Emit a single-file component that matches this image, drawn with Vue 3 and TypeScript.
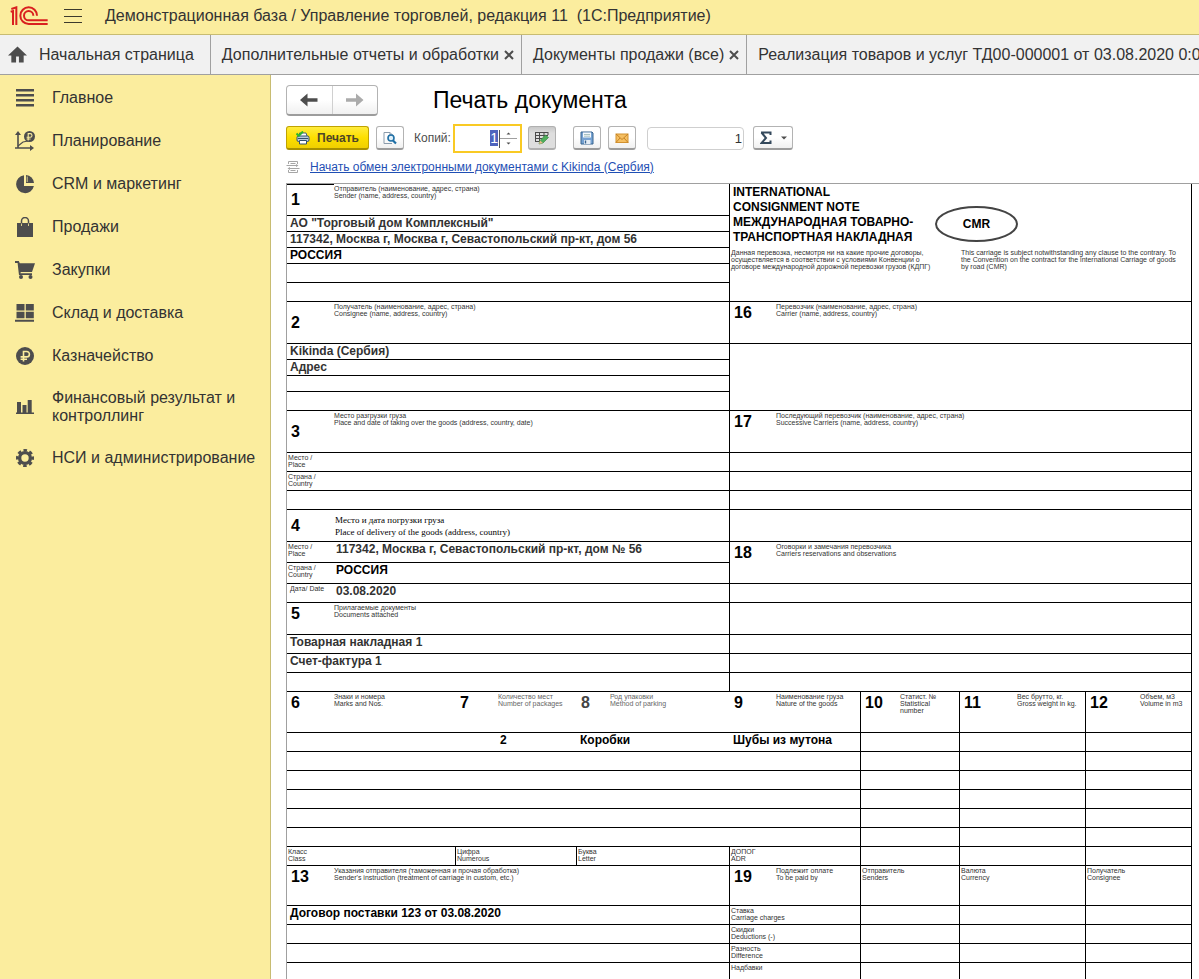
<script setup lang="ts">
import { onMounted, ref } from 'vue'

type Kind = 'blank' | 'field' | 'value' | 'tiny' | 'title'

interface Cell {
  kind: Kind
  span?: number
  rows?: number
  num?: string
  offset?: number
  lines?: string[]
  text?: string
  mods?: string
}

interface Row {
  height: number
  cells: Cell[]
}

const columns = [47, 122, 121, 153, 131, 99, 126, 106]

const blank = (span: number, mods = '', rows = 1): Cell => ({ kind: 'blank', span, mods, rows })
const field = (num: string, span: number, offset: number, lines: string[], mods = ''): Cell => ({
  kind: 'field', num, span, offset, lines, mods,
})
const value = (text: string, span: number, mods = ''): Cell => ({ kind: 'value', text, span, mods })
const tiny = (lines: string[], span: number, mods = ''): Cell => ({ kind: 'tiny', lines, span, mods })

const emptyGoods = (): Row => ({ height: 19, cells: [blank(5), blank(1), blank(1), blank(1)] })
const charge = (lines: string[], text = ''): Row => ({
  height: 19,
  cells: [text ? value(text, 4) : blank(4), tiny(lines, 1), blank(1), blank(1), blank(1)],
})

const rows: Row[] = [
  {
    height: 32,
    cells: [
      field('1', 4, 47, ['Отправитель (наименование, адрес, страна)', 'Sender (name, address, country)'], 'mid current'),
      { kind: 'title', span: 4, rows: 6 },
    ],
  },
  { height: 16, cells: [value('АО "Торговый дом Комплексный"', 4, 'soft')] },
  { height: 16, cells: [value('117342, Москва г, Москва г, Севастопольский пр-кт, дом 56', 4, 'soft')] },
  { height: 16, cells: [value('РОССИЯ', 4)] },
  { height: 19, cells: [blank(4)] },
  { height: 19, cells: [blank(4)] },
  {
    height: 42,
    cells: [
      field('2', 4, 47, ['Получатель (наименование, адрес, страна)', 'Consignee (name, address, country)'], 'mid'),
      field('16', 4, 46, ['Перевозчик (наименование, адрес, страна)', 'Carrier (name, address, country)']),
    ],
  },
  { height: 16, cells: [value('Kikinda (Сербия)', 4, 'soft'), blank(4, '', 4)] },
  { height: 16, cells: [value('Адрес', 4, 'soft')] },
  { height: 16, cells: [blank(4)] },
  { height: 19, cells: [blank(4)] },
  {
    height: 42,
    cells: [
      field('3', 4, 47, ['Место разгрузки груза', 'Place and date of taking over the goods (address, country, date)'], 'mid'),
      field('17', 4, 46, ['Последующий перевозчик (наименование, адрес, страна)', 'Successive Carriers (name, address, country)']),
    ],
  },
  { height: 19, cells: [tiny(['Место /', 'Place'], 4), blank(4)] },
  { height: 19, cells: [tiny(['Страна /', 'Country'], 4), blank(4)] },
  { height: 19, cells: [blank(4), blank(4)] },
  {
    height: 32,
    cells: [
      field('4', 4, 48, ['Место и дата погрузки груза', 'Place of delivery of the goods (address, country)'], 'mid serif'),
      blank(4),
    ],
  },
  {
    height: 21,
    cells: [
      tiny(['Место /', 'Place'], 1, 'open'),
      value('117342, Москва г, Севастопольский пр-кт, дом № 56', 3, 'soft near'),
      { ...field('18', 4, 46, ['Оговорки и замечания перевозчика', 'Carriers reservations and observations']), rows: 2 },
    ],
  },
  { height: 21, cells: [tiny(['Страна /', 'Country'], 1, 'open'), value('РОССИЯ', 3, 'near')] },
  { height: 19, cells: [tiny(['Дата/ Date'], 1, 'open inset'), value('03.08.2020', 3, 'soft near'), blank(4)] },
  { height: 32, cells: [field('5', 4, 47, ['Прилагаемые документы', 'Documents attached']), blank(4)] },
  { height: 19, cells: [value('Товарная накладная 1', 4, 'soft'), blank(4)] },
  { height: 19, cells: [value('Счет-фактура 1', 4, 'soft'), blank(4)] },
  { height: 19, cells: [blank(4), blank(4)] },
  {
    height: 41,
    cells: [
      field('6', 2, 47, ['Знаки и номера', 'Marks and Nos.'], 'open'),
      field('7', 1, 42, ['Количество мест', 'Number of packages'], 'open pale'),
      field('8', 1, 33, ['Род упаковки', 'Method of parking'], 'open pale dim'),
      field('9', 1, 46, ['Наименование груза', 'Nature of the goods']),
      field('10', 1, 39, ['Статист. №', 'Statistical', 'number']),
      field('11', 1, 57, ['Вес брутто, кг.', 'Gross weight in kg.']),
      field('12', 1, 54, ['Объем, м3', 'Volume in m3']),
    ],
  },
  {
    height: 19,
    cells: [
      blank(2, 'open'), value('2', 1, 'open count'), value('Коробки', 1, 'open'), value('Шубы из мутона', 1),
      blank(1), blank(1), blank(1),
    ],
  },
  emptyGoods(), emptyGoods(), emptyGoods(), emptyGoods(), emptyGoods(),
  {
    height: 19,
    cells: [
      tiny(['Класс', 'Class'], 2), tiny(['Цифра', 'Numerous'], 1), tiny(['Буква', 'Letter'], 1),
      tiny(['ДОПОГ', 'ADR'], 1), blank(1), blank(1), blank(1),
    ],
  },
  {
    height: 40,
    cells: [
      field('13', 4, 47, ['Указания отправителя (таможенная и прочая обработка)', "Sender's instruction (treatment of carriage in custom, etc.)"]),
      field('19', 1, 46, ['Подлежит оплате', 'To be paid by']),
      tiny(['Отправитель', 'Senders'], 1),
      tiny(['Валюта', 'Currency'], 1),
      tiny(['Получатель', 'Consignee'], 1),
    ],
  },
  charge(['Ставка', 'Carriage charges'], 'Договор поставки 123 от 03.08.2020'),
  charge(['Скидки', 'Deductions (-)']),
  charge(['Разность', 'Difference']),
  charge(['Надбавки']),
]

const sections = [
  { icon: 'menu', label: 'Главное' },
  { icon: 'plan', label: 'Планирование' },
  { icon: 'pie', label: 'CRM и маркетинг' },
  { icon: 'bag', label: 'Продажи' },
  { icon: 'cart', label: 'Закупки' },
  { icon: 'store', label: 'Склад и доставка' },
  { icon: 'coin', label: 'Казначейство' },
  { icon: 'bars', label: 'Финансовый результат и контроллинг' },
  { icon: 'gear', label: 'НСИ и администрирование' },
]

const copies = ref('1')
const total = ref('1')
const copiesInput = ref<HTMLInputElement | null>(null)

const step = (delta: number) => {
  copies.value = String(Math.max(1, (parseInt(copies.value, 10) || 1) + delta))
}

onMounted(() => {
  copiesInput.value?.focus()
  copiesInput.value?.select()
})
</script>

<template>
  <div class="app">
    <header class="titlebar">
      <svg class="logo" viewBox="0 0 114 60" fill="none" stroke="#d9201f">
        <path d="M2 17 L9 15 V57 M4 9 L19 4 V57" stroke-width="6" />
        <path d="M81 29 A25 25 0 1 0 56 54 H113" stroke-width="6" />
        <path d="M70 29 A14 14 0 1 0 56 43 H113" stroke-width="6" />
      </svg>
      <button class="burger" aria-label="Меню">
        <svg viewBox="0 0 18 16" stroke="#3c3a2c" stroke-width="1"><path d="M0 1.500H18M0 8.500H18M0 14.500H18" /></svg>
      </button>
      <span class="app-name">Демонстрационная база / Управление торговлей, редакция 11 &nbsp;(1С:Предприятие)</span>
    </header>

    <nav class="tabs">
      <button class="tab home">
        <svg viewBox="0 0 20 17" fill="#4d4d4d"><path d="M10 0 L20 9.500 H16.500 V17 H11.500 V10.500 H8.500 V17 H3.500 V9.500 H0 Z" /></svg>
        <span>Начальная страница</span>
      </button>
      <div class="tab">
        <span>Дополнительные отчеты и обработки</span>
        <button class="close" aria-label="Закрыть"><svg viewBox="0 0 10 10"><path d="M1 1 L9 9 M9 1 L1 9" /></svg></button>
      </div>
      <div class="tab">
        <span>Документы продажи (все)</span>
        <button class="close" aria-label="Закрыть"><svg viewBox="0 0 10 10"><path d="M1 1 L9 9 M9 1 L1 9" /></svg></button>
      </div>
      <div class="tab last"><span>Реализация товаров и услуг ТД00-000001 от 03.08.2020 0:00</span></div>
    </nav>

    <div class="body">
      <aside class="sidebar">
        <a v-for="s in sections" :key="s.label" class="section" href="#">
          <svg class="section-icon" viewBox="0 0 20 20" fill="#4d4d4d">
            <path v-if="s.icon === 'menu'" d="M1 1h18v2.400H1zM1 6h18v2.400H1zM1 11h18v2.400H1zM1 16h18v2.400H1z" />
            <g v-else-if="s.icon === 'plan'">
              <path d="M3 0 L6 4 H3.800 V16.200 H15 V14 L19 17 L15 20 V17.800 H0 V16.200 H2.200 V4 H0 Z" />
              <path d="M3 15 L8 11 L13 10" fill="none" stroke="#4d4d4d" stroke-width="1.200" />
              <circle cx="14.500" cy="5.500" r="5.500" />
              <path d="M13.200 9.500V2.600h2a1.800 1.800 0 0 1 0 3.600h-3.600M11.600 8h4" fill="none" stroke="#fbed9e" stroke-width="1.100" />
            </g>
            <g v-else-if="s.icon === 'pie'">
              <path d="M9 1.200 A9 9 0 1 0 18.900 12 H9 Z" />
              <path d="M11 1 A8.500 8.500 0 0 1 19 9 H11 Z" />
              <path d="M12.200 2.500V8" stroke="#fbed9e" stroke-width="0.800" />
            </g>
            <g v-else-if="s.icon === 'bag'">
              <path d="M2 6 H18 V20 H2 Z" />
              <path d="M6.500 9 V4 A3.500 3.500 0 0 1 13.500 4 V9" fill="none" stroke="#4d4d4d" stroke-width="1.500" />
              <path d="M6.500 6.500V9M13.500 6.500V9" stroke="#fbed9e" stroke-width="0.800" />
            </g>
            <g v-else-if="s.icon === 'cart'">
              <path d="M0 1 H3.800 L4.800 3.200 H20 L17 12 H5.800 L5.400 13.200 H17 V15 H4 L3.600 12 L2.600 3 H0 Z" />
              <circle cx="6" cy="17" r="2" /><circle cx="15.500" cy="17" r="2" />
            </g>
            <path v-else-if="s.icon === 'store'" d="M1.500 1h8v6.500h-8zM10.800 1h8v6.500h-8zM1.500 8.800h8v6.500h-8zM10.800 8.800h8v6.500h-8zM0 16.800h19v2H0z" />
            <g v-else-if="s.icon === 'coin'">
              <circle cx="10" cy="10" r="9" />
              <path d="M8.500 15.500V5.500h3.200a2.700 2.700 0 0 1 0 5.400H5.600M5.600 13.300h6.400" fill="none" stroke="#fbed9e" stroke-width="1.600" />
            </g>
            <path v-else-if="s.icon === 'bars'" d="M2 5h4v10.500h1.500V8h4v7.500h1.200V3h4v12.500H19V17H1v-1.500h1z" />
            <g v-else>
              <circle cx="10" cy="10" r="5.400" fill="none" stroke="#4d4d4d" stroke-width="3.400" />
              <circle cx="10" cy="10" r="7.800" fill="none" stroke="#4d4d4d" stroke-width="2.400" stroke-dasharray="3.600 2.526" stroke-dashoffset="1.800" />
            </g>
          </svg>
          <span>{{ s.label }}</span>
        </a>
      </aside>

      <main class="content">
        <div class="heading">
          <div class="history">
            <button aria-label="Назад"><svg viewBox="0 0 18 14" fill="#4d4d4d"><path d="M0 7 L7.500 0.500 V5.300 H17.500 V8.700 H7.500 V13.500 Z" /></svg></button>
            <button aria-label="Вперед"><svg viewBox="0 0 18 14" fill="#ababab"><path d="M17.500 7 L10 0.500 V5.300 H0 V8.700 H10 V13.500 Z" /></svg></button>
          </div>
          <h1>Печать документа</h1>
        </div>

        <div class="toolbar">
          <button class="btn print">
            <svg viewBox="0 0 14 14">
              <path d="M3.500 5 V2 H10 L11 5" fill="#fff" stroke="#4a6078" />
              <rect x="1" y="5" width="12" height="5.500" rx="1.500" fill="#b9cbdc" stroke="#34506c" />
              <path d="M2 7.500H12" stroke="#34506c" />
              <path d="M3.500 9.500H10.500V13H3.500Z" fill="#fff" stroke="#34506c" />
              <path d="M0.500 2.500 L2.800 4.800 L7 0.500" fill="none" stroke="#2db52d" stroke-width="2" />
            </svg>
            <span>Печать</span>
          </button>
          <button class="btn icon" aria-label="Предварительный просмотр">
            <svg viewBox="0 0 14 14" fill="none">
              <path d="M9 12.500H1V1.500H7L9.500 4" stroke="#8b9bab" /><path d="M7 1.500V4H9.500" stroke="#8b9bab" />
              <circle cx="8" cy="7" r="3" fill="#dff0fa" stroke="#1f6fa5" stroke-width="1.600" />
              <path d="M10 9.500 L13 12.500" stroke="#1f6fa5" stroke-width="2.200" />
            </svg>
          </button>
          <label class="copies-label" for="copies">Копий:</label>
          <div class="copies">
            <input id="copies" ref="copiesInput" v-model="copies" type="text" inputmode="numeric" />
            <div class="spin">
              <button aria-label="Больше" @click="step(1)"><svg viewBox="0 0 5 3"><path d="M0.500 2.500 L2.500 0.500 L4.500 2.500Z" /></svg></button>
              <button aria-label="Меньше" @click="step(-1)"><svg viewBox="0 0 5 3"><path d="M0.500 0.500 L2.500 2.500 L4.500 0.500Z" /></svg></button>
            </div>
          </div>
          <button class="btn icon pressed" aria-label="Редактирование">
            <svg viewBox="0 0 14 14" fill="none">
              <path d="M0.500 1.500H13M0.500 4.500H13M0.500 7.500H9M0.500 10.500H7M0.500 1V11M4.500 1V11M9 1V6M13 1V4" stroke="#4a4a4a" />
              <path d="M4 13 L5 9.500 L10.500 4 L13.500 6.500 L8 12 Z" fill="#4fae5c" stroke="#2f7d3b" stroke-width="0.600" />
              <path d="M4 13 L5 9.500 L8 12 Z" fill="#e9b98a" />
            </svg>
          </button>
          <button class="btn icon save" aria-label="Сохранить">
            <svg viewBox="0 0 14 14">
              <path d="M1 1H12L13 2V13H1Z" fill="#77a3d3" stroke="#39648f" />
              <rect x="3" y="1.500" width="8" height="5" fill="#f5f9fc" /><path d="M4 3.500H10M4 5.200H10" stroke="#8aa" stroke-width="0.700" />
              <rect x="4" y="9" width="6.500" height="4" fill="#e6eef6" /><path d="M5.500 9.500V12.500" stroke="#39648f" stroke-width="1.400" />
            </svg>
          </button>
          <button class="btn icon" aria-label="Отправить по почте">
            <svg viewBox="0 0 14 14">
              <rect x="1" y="3" width="12" height="8.500" fill="#f5bf62" stroke="#d2912f" />
              <path d="M1 3 L7 8.500 L13 3 M1 11.500 L5 7 M13 11.500 L9 7" fill="none" stroke="#c27d1f" stroke-width="0.900" />
            </svg>
          </button>
          <input v-model="total" class="total" type="text" aria-label="Сумма выделенных ячеек" readonly />
          <button class="btn sigma" aria-label="Сумма">
            <svg class="sum" viewBox="0 0 12 14"><path d="M1 1.500H10.500V4M1.500 1.500L6 7L1.500 12H10.500V9.500" fill="none" stroke="#34495c" stroke-width="2" /></svg>
            <svg class="drop" viewBox="0 0 6 4"><path d="M0 0.500H6L3 3.500Z" fill="#4d4d4d" /></svg>
          </button>
        </div>

        <div class="exchange">
          <svg viewBox="0 0 14 14" fill="none" stroke="#a6a6a6">
            <path d="M2.500 4V1.500H11.500V4M2.500 10V12.500H11.500V10M4.500 3.500H9.500M4.500 10.500H9.500" />
            <path d="M0.500 5.500H11M3 8.500H13.500" /><path d="M10 4 L12.500 5.500 L10 7ZM4 7 L1.500 8.500 L4 10Z" fill="#a6a6a6" stroke="none" />
          </svg>
          <a href="#">Начать обмен электронными документами с Kikinda (Сербия)</a>
        </div>

        <div class="sheet">
          <table>
            <colgroup><col v-for="(w, i) in columns" :key="i" :style="{ width: w + 'px' }" /></colgroup>
            <tbody>
              <tr v-for="(row, r) in rows" :key="r" :style="{ height: row.height + 'px' }">
                <td v-for="(c, i) in row.cells" :key="i" :colspan="c.span" :rowspan="c.rows" :class="[c.kind, c.mods]">
                  <div v-if="c.kind === 'field'" class="field-box">
                    <b class="num" :style="{ width: c.offset + 'px' }">{{ c.num }}</b>
                    <div class="caption"><div v-for="l in c.lines" :key="l">{{ l }}</div></div>
                  </div>
                  <template v-else-if="c.kind === 'value'">{{ c.text }}</template>
                  <template v-else-if="c.kind === 'tiny'"><div v-for="l in c.lines" :key="l">{{ l }}</div></template>
                  <template v-else-if="c.kind === 'title'">
                    <div class="note-head">
                      <div class="note-name">
                        INTERNATIONAL<br />CONSIGNMENT NOTE<br />МЕЖДУНАРОДНАЯ ТОВАРНО-<br />ТРАНСПОРТНАЯ НАКЛАДНАЯ
                      </div>
                      <div class="cmr">CMR</div>
                    </div>
                    <div class="note-terms">
                      <p>Данная перевозка, несмотря ни на какие прочие договоры,<br />осуществляется в соответствии с условиями Конвенции о<br />договоре международной дорожной перевозки грузов (КДПГ)</p>
                      <p>This carriage is subject notwithstanding any clause to the contrary. To<br />the Convention on the contract for the international Carriage of goods<br />by road (CMR)</p>
                    </div>
                  </template>
                </td>
              </tr>
            </tbody>
          </table>
        </div>
      </main>
    </div>
  </div>
</template>

<style>
body { margin: 0; }
</style>

<style scoped>
.app {
  display: flex;
  flex-direction: column;
  height: 100vh;
  overflow: hidden;
  background: #fff;
  color: #333;
  font-family: "Liberation Sans", Arial, sans-serif;
  font-size: 16px;
}
.app * { box-sizing: border-box; }
button { font: inherit; color: inherit; padding: 0; border: 0; background: none; }
svg { display: block; flex: none; }

.titlebar {
  flex: none;
  display: flex;
  align-items: center;
  height: 35px;
  padding: 0 10px 3px;
  background: #fbed9e;
  border-bottom: 1px solid #c8bc72;
  white-space: nowrap;
}
.logo { width: 38px; height: 20px; }
.burger { margin: 0 23px 0 16px; }
.burger svg { width: 18px; height: 16px; }
.app-name { line-height: 20px; }

.tabs {
  flex: none;
  display: flex;
  height: 40px;
  background: #f1f1f1;
  border-bottom: 1px solid #a0a0a0;
  white-space: nowrap;
  overflow: hidden;
}
.tab {
  flex: none;
  display: flex;
  align-items: center;
  padding: 0 7px 0 11px;
  border-right: 1px solid #a0a0a0;
}
.home { padding: 0 16px 0 8px; gap: 12px; }
.home svg { width: 19px; height: 17px; }
.last { border-right: 0; }
.close { margin-left: 5px; }
.close svg { width: 10px; height: 10px; fill: none; stroke: #4d4d4d; stroke-width: 2; }

.body { flex: 1; display: flex; min-height: 0; }
.sidebar {
  flex: none;
  width: 271px;
  padding-top: 1px;
  background: #fbed9e;
  border-right: 1px solid #c8bc72;
}
.section {
  display: flex;
  align-items: center;
  gap: 17px;
  min-height: 43px;
  padding: 12px 10px 11px 15px;
  color: #333;
  line-height: 18px;
  text-decoration: none;
}
.section-icon { width: 20px; height: 20px; }

.content {
  flex: 1;
  min-width: 0;
  display: flex;
  flex-direction: column;
  padding: 10px 0 0 15px;
}
.heading { flex: none; display: flex; align-items: flex-start; gap: 55px; height: 31px; }
h1 { margin: 0; font-size: 23px; font-weight: 400; line-height: 30px; color: #000; white-space: nowrap; }
.history {
  display: flex;
  height: 31px;
  width: 92px;
  border: 1px solid #b3b3b3;
  border-bottom: 2px solid #9c9c9c;
  border-radius: 4px;
  background: linear-gradient(#fff 50%, #f0f0f0);
}
.history button { flex: 1; display: flex; align-items: center; justify-content: center; }
.history button + button { border-left: 1px solid #d0d0d0; }
.history svg { width: 18px; height: 14px; }

.toolbar { flex: none; display: flex; align-items: center; height: 30px; margin-top: 7px; }
.btn {
  flex: none;
  display: flex;
  align-items: center;
  justify-content: center;
  height: 24px;
  border: 1px solid #b3b3b3;
  border-bottom: 2px solid #9c9c9c;
  border-radius: 3px;
  background: linear-gradient(#fff 50%, #f0f0f0);
}
.print {
  width: 83px;
  gap: 7px;
  margin-right: 7px;
  border-color: #c0a300;
  border-bottom-color: #a89000;
  background: linear-gradient(#ffec3d, #fddf00 50%, #f0cf00);
  color: #4d4628;
  font-size: 12px;
  font-weight: 700;
}
.btn svg { width: 14px; height: 14px; }
.icon { width: 28px; }
.pressed { margin-left: 6px; border-color: #b0b0b0; background: linear-gradient(#c8c8c8, #dedede 30%); }
.save { margin: 0 7px 0 17px; }
.copies-label { width: 39px; margin-left: 10px; font-size: 12px; color: #4d4d4d; white-space: nowrap; }
.copies { flex: none; display: flex; width: 69px; height: 29px; border: 2px solid #f9ca24; background: #fff; }
.copies input {
  flex: 1;
  min-width: 0;
  padding: 0 1px 0 0;
  border: 0;
  outline: 0;
  background: none;
  color: #333;
  font: 14px "Liberation Sans", Arial, sans-serif;
  text-align: right;
}
.copies input::selection { background: #4f64bd; color: #fff; }
.spin {
  display: flex;
  flex-direction: column;
  width: 18px;
  margin: 4px 3px 3px 0;
  border-left: 1px solid #555;
}
.spin button { flex: 1; display: flex; align-items: center; justify-content: center; }
.spin button + button { border-top: 1px solid #a0a0a0; }
.spin svg { width: 5px; height: 3px; fill: #4d4d4d; }
.total {
  width: 97px;
  height: 23px;
  margin: 0 9px 0 11px;
  padding: 0 1px;
  border: 1px solid #cfcfcf;
  border-radius: 4px;
  outline: 0;
  background: #fff;
  color: #333;
  font: 13px "Liberation Sans", Arial, sans-serif;
  text-align: right;
}
.sigma { width: 40px; gap: 9px; }
.btn .sum { width: 12px; height: 14px; }
.btn .drop { width: 6px; height: 4px; }

.exchange { flex: none; display: flex; align-items: center; gap: 10px; height: 30px; padding-bottom: 3px; font-size: 12px; }
.exchange svg { width: 14px; height: 14px; }
.exchange a { color: #1f4fb4; white-space: nowrap; }

.sheet {
  flex: 1;
  min-height: 0;
  overflow: hidden;
  padding-right: 7px;
  border: solid #a0a0a0;
  border-width: 1px 0 0 1px;
  color: #000;
}
table { width: 100%; table-layout: fixed; border-collapse: separate; border-spacing: 0; }
td {
  padding: 0;
  border-right: 1px solid #000;
  border-bottom: 1px solid #000;
  vertical-align: top;
  white-space: nowrap;
}
td.open { border-right: 0; }
.field-box { display: flex; }
.num { flex: none; padding: 2px 0 0 4px; font-size: 16px; line-height: 18px; }
.mid .num { align-self: center; padding-top: 0; }
.dim .num { color: #444; }
.caption { padding-top: 1px; }
.caption, .tiny, .note-terms { font-size: 7px; line-height: 7px; color: #333; }
.mid .caption { height: 41px; }
.current .caption, .serif .caption { height: 31px; }
.serif .caption {
  padding-top: 4px;
  font-family: "Liberation Serif", "Times New Roman", serif;
  font-size: 9px;
  line-height: 12px;
  color: #000;
}
.current { background: linear-gradient(#000, #000) no-repeat left top / 47px 1px; }
.pale .caption { color: #666; }
.tiny { padding: 1px 0 0 1px; }
.inset { padding-left: 3px; }
.value { padding: 0 0 0 3px; font-size: 12px; font-weight: 700; line-height: 15px; }
.soft { color: #333; }
.near { padding-left: 2px; }
.count { padding-left: 44px; }

.note-head { display: flex; height: 65px; }
.note-name { width: 205px; padding: 1px 0 0 3px; font-size: 12px; font-weight: 700; line-height: 15px; }
.cmr {
  width: 83px;
  height: 36px;
  margin-top: 22px;
  border: 2px solid #444;
  border-radius: 50%;
  font-size: 12px;
  font-weight: 700;
  line-height: 32px;
  text-align: center;
}
.note-terms { display: grid; grid-template-columns: 230px 1fr; padding-left: 1px; }
.note-terms p { margin: 0; }
</style>
